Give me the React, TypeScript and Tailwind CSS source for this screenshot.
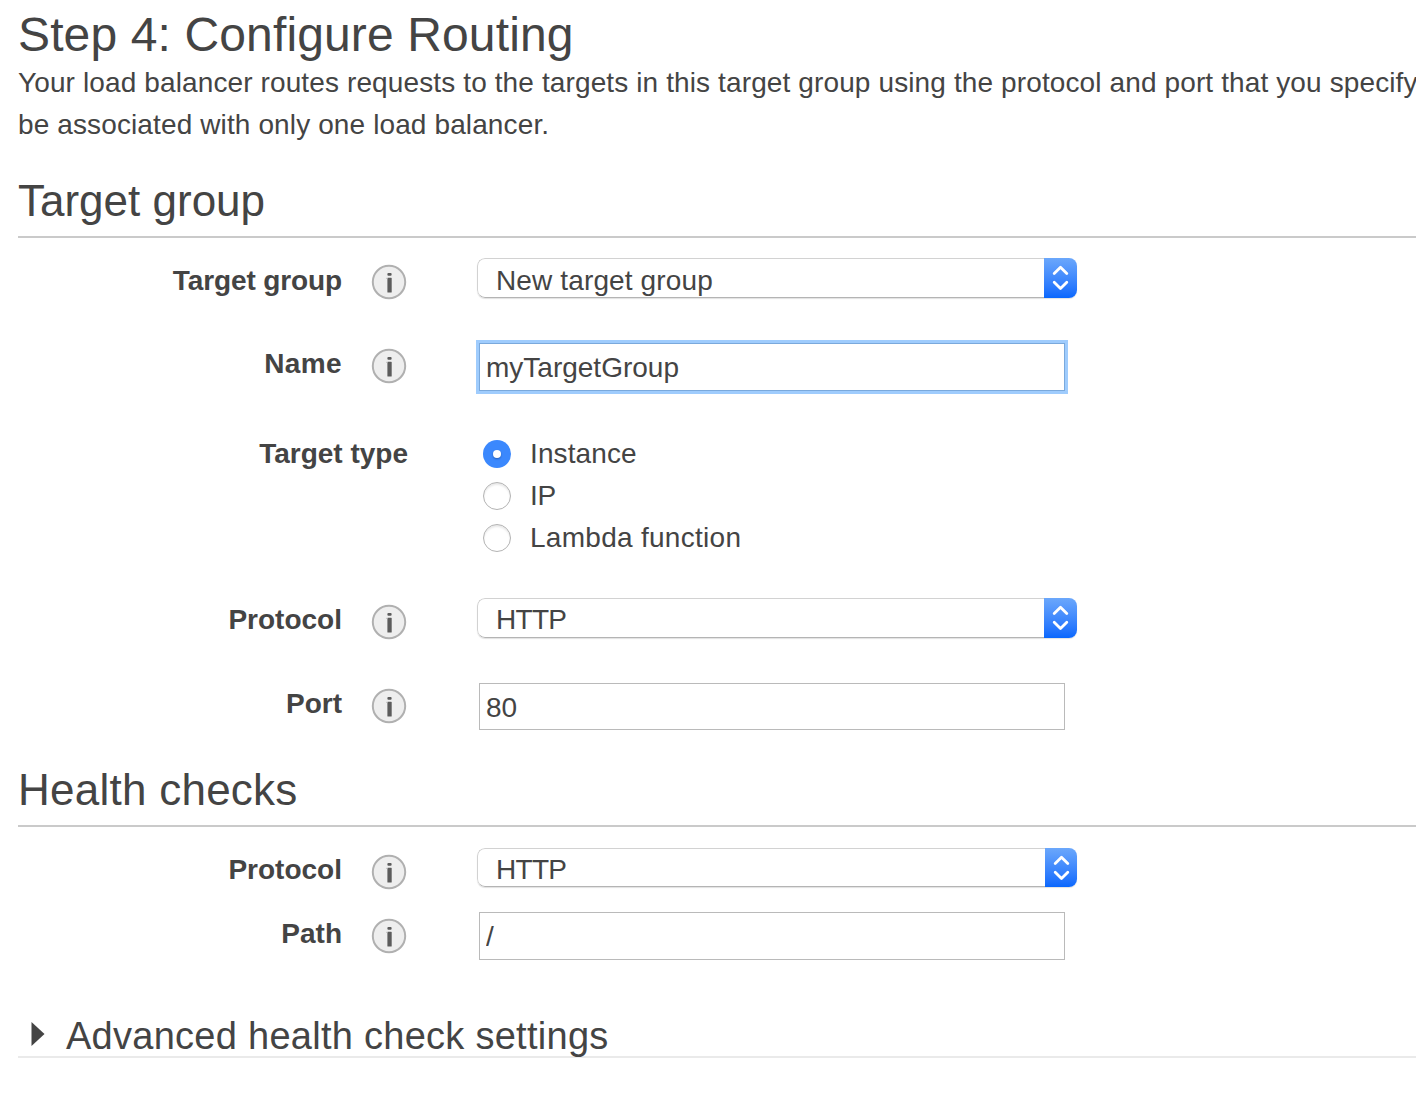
import type { ReactNode } from "react";

function InfoIcon() {
  return (
    <svg width="36" height="36" viewBox="0 0 36 36" className="block" aria-hidden="true">
      <circle cx="18" cy="18" r="16.2" fill="#eeeeee" stroke="#b0b0b0" strokeWidth="2" />
      <rect x="16.4" y="9" width="4.2" height="2.8" rx="1" fill="#5c5c5c" />
      <rect x="16.4" y="13.8" width="4.3" height="14.8" rx="0.6" fill="#5c5c5c" />
      <rect x="15.4" y="13.8" width="1.2" height="1.2" fill="#b4b4b4" />
    </svg>
  );
}

function Row({
  label,
  height,
  info = true,
  labelClass = "mt-[21px]",
  children,
}: {
  label: string;
  height: string;
  info?: boolean;
  labelClass?: string;
  children: ReactNode;
}) {
  return (
    <div className={`flex items-start ${height}`}>
      <div
        className={`shrink-0 text-right font-bold ${labelClass} ${info ? "w-[324px]" : "w-[390px]"}`}
      >
        {label}
      </div>
      {info && (
        <div className="mt-[26px] ml-[29px] w-[37px] shrink-0">
          <InfoIcon />
        </div>
      )}
      <div className="ml-[69px]">{children}</div>
    </div>
  );
}

function Select({
  value,
  textClass,
  heightClass = "h-10",
  buttonClass = "w-[33px]",
}: {
  value: string;
  textClass: string;
  heightClass?: string;
  buttonClass?: string;
}) {
  return (
    <div
      className={`mt-5 flex w-[600px] overflow-hidden rounded-lg bg-white shadow-[0_1px_1px_rgba(0,0,0,0.12)] ${heightClass}`}
    >
      <div
        className={`flex-1 rounded-l-lg border border-r-0 border-[#d2d2d2] border-b-[#b4b4b4] pl-[18px] ${heightClass} ${textClass}`}
      >
        {value}
      </div>
      <div
        className={`flex justify-center bg-linear-to-b from-[#6ba7fb] to-[#0767fd] ${heightClass} ${buttonClass}`}
      >
        <svg width="33" height="40" viewBox="0 0 33 40" fill="none" stroke="#fff" strokeWidth="2.8" strokeLinecap="round" strokeLinejoin="round" className="shrink-0" aria-hidden="true">
          <path d="M10.2 15.5 16.5 9.2l6.3 6.3M10.2 24.2l6.3 6.3 6.3-6.3" />
        </svg>
      </div>
    </div>
  );
}

function Radio({ label, checked = false }: { label: string; checked?: boolean }) {
  return (
    <div className="flex h-[42px] items-center pl-1.5">
      {checked ? (
        <span className="flex size-7 items-center justify-center rounded-full bg-[#3b88fd]">
          <span className="size-2 rounded-full bg-white shadow-[0_1px_2px_rgba(0,0,0,0.3)]" />
        </span>
      ) : (
        <span className="size-7 rounded-full border border-[#b3b3b3] bg-white shadow-[inset_0_2px_2px_rgba(0,0,0,0.09)]" />
      )}
      <span className="ml-[19px]">{label}</span>
    </div>
  );
}

function SectionTitle({ children }: { children: ReactNode }) {
  return (
    <h2 className="border-b-2 border-[#cacaca] pt-5 text-[44px] leading-[70px]">{children}</h2>
  );
}

export default function App() {
  return (
    <main className="h-[1094px] w-full overflow-hidden bg-white pl-[18px] font-['Liberation_Sans',Arial,sans-serif] text-[28px] leading-[42px] text-[#444444]">
      <h1 className="pt-2 text-[48px] leading-[53px] tracking-[0.13px]">Step 4: Configure Routing</h1>
      <p className="pt-px tracking-[0.12px] whitespace-nowrap">
        Your load balancer routes requests to the targets in this target group using the protocol and port that you specify
        <br />
        be associated with only one load balancer.
      </p>

      <SectionTitle>Target group</SectionTitle>
      <Row label="Target group" height="h-[84px]" labelClass="mt-[22px] tracking-[-0.12px]">
        <Select value="New target group" textClass="leading-[44px] tracking-[0.13px]" />
      </Row>
      <Row label="Name" height="h-[90px]" labelClass="mt-[21px] tracking-[0.4px]">
        <input
          defaultValue="myTargetGroup"
          className="mt-[21px] ml-0.5 block h-12 w-[586px] border border-[#7aa9dc] bg-white pt-0.5 pl-1.5 outline-3 outline-[#9fccfd]"
        />
      </Row>
      <Row label="Target type" height="h-[166px]" info={false}>
        <div className="mt-[21px]">
          <div className="tracking-[0.1px]">
            <Radio label="Instance" checked />
          </div>
          <div className="tracking-[-0.4px]">
            <Radio label="IP" />
          </div>
          <div className="tracking-[0.28px]">
            <Radio label="Lambda function" />
          </div>
        </div>
      </Row>
      <Row label="Protocol" height="h-[84px]">
        <Select value="HTTP" textClass="leading-[42px] tracking-[-0.7px]" />
      </Row>
      <Row label="Port" height="h-[72px]">
        <input
          defaultValue="80"
          className="mt-[21px] ml-0.5 block h-[47px] w-[586px] border border-[#bababa] bg-white pt-0.5 pl-1.5 outline-none"
        />
      </Row>

      <div className="pt-px tracking-[0.25px]">
        <SectionTitle>Health checks</SectionTitle>
      </div>
      <div className="pt-px">
        <Row label="Protocol" height="h-16">
          <Select
            value="HTTP"
            textClass="leading-[42px] tracking-[-0.7px]"
            heightClass="h-[39px]"
            buttonClass="w-8"
          />
        </Row>
        <Row label="Path" height="h-[122px]">
          <input
            defaultValue="/"
            className="mt-5 ml-0.5 block h-12 w-[586px] border border-[#bababa] bg-white pt-0.5 pl-1.5 outline-none"
          />
        </Row>
      </div>

      <div className="flex h-11 border-b-2 border-[#eaeaea] pl-[13px]">
        <svg width="14" height="26" viewBox="0 0 14 26" className="mt-[7px] shrink-0" aria-hidden="true">
          <path d="M.5 1 13.5 13 .5 25z" fill="#444444" />
        </svg>
        <h3 className="ml-[21px] text-[38px] leading-[44px] tracking-[0.27px]">
          Advanced health check settings
        </h3>
      </div>
    </main>
  );
}
